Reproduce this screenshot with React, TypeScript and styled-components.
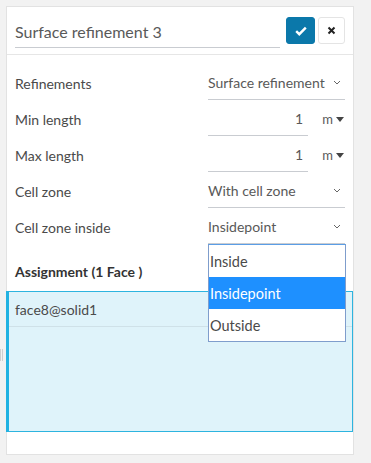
import React from 'react';
import styled, { createGlobalStyle } from 'styled-components';

const GlobalStyle = createGlobalStyle`
  html, body {
    margin: 0;
    padding: 0;
    background: #f2f2f2;
  }
  body {
    font-family: Lato, "Open Sans", "Liberation Sans", sans-serif;
    color: #333;
  }
  * {
    box-sizing: border-box;
  }
`;

const Page = styled.div`
  position: relative;
  width: 371px;
  height: 463px;
  padding: 6px 17px 8px 6px;
`;

const Handle = styled.div`
  position: absolute;
  left: 0;
  top: 349px;
  width: 3px;
  height: 12px;
  border-left: 1px solid #cfcfcf;
  border-right: 1px solid #cfcfcf;
`;

const Panel = styled.div`
  position: relative;
  width: 348px;
  height: 449px;
  background: #ffffff;
  border: 1px solid #e2e2e2;
`;

const Header = styled.div`
  display: flex;
  align-items: flex-start;
  gap: 6px;
  padding: 10px 8px 6px 8px;
  border-bottom: 1px solid #e6e6e6;
`;

const TitleInput = styled.div`
  flex: 1;
  height: 31px;
  display: flex;
  align-items: center;
  padding-bottom: 1px;
  font-size: 16px;
  color: #595959;
  border-bottom: 1px solid #c9ccd1;
`;

const Buttons = styled.div`
  display: flex;
  gap: 3px;
`;

const IconButton = styled.div<{ $primary?: boolean }>`
  width: ${(p) => (p.$primary ? '29px' : '27px')};
  height: 27px;
  border-radius: 3px;
  display: flex;
  align-items: center;
  justify-content: center;
  background: ${(p) => (p.$primary ? '#0b78aa' : '#ffffff')};
  border: 1px solid ${(p) => (p.$primary ? '#0b78aa' : '#e4e4e4')};
`;

const Form = styled.div`
  padding: 9px 8px 0 8px;
`;

const Row = styled.div`
  display: flex;
  align-items: center;
  justify-content: space-between;
  height: 36px;
  font-size: 14px;
  color: #4a4a4a;
`;

const Label = styled.div`
  padding-top: 2px;
`;

const Select = styled.div`
  position: relative;
  width: 137px;
  height: 100%;
  display: flex;
  align-items: center;
  justify-content: space-between;
  padding-top: 2px;
  color: #595959;
  border-bottom: 1px solid #c9ccd1;
  padding-right: 4px;
`;

const LengthField = styled.div`
  display: flex;
  align-items: center;
  width: 137px;
  height: 100%;
  padding-top: 2px;
`;

const NumberInput = styled.div`
  width: 100px;
  height: 100%;
  display: flex;
  align-items: center;
  justify-content: flex-end;
  padding-right: 5px;
  color: #595959;
  border-bottom: 1px solid #c9ccd1;
`;

const Unit = styled.div`
  flex: 1;
  display: flex;
  align-items: center;
  justify-content: flex-end;
  gap: 3px;
  padding-right: 1px;
  color: #595959;
  font-size: 13px;
`;

const Dropdown = styled.div`
  position: absolute;
  left: 0;
  top: 36px;
  width: 138px;
  background: #ffffff;
  border: 1px solid #7f9dcc;
  border-top-color: #5b9ee6;
  z-index: 2;
`;

const Option = styled.div<{ $active?: boolean }>`
  height: 32px;
  display: flex;
  align-items: center;
  padding-left: 1px;
  font-size: 14.5px;
  color: ${(p) => (p.$active ? '#ffffff' : '#4a4a4a')};
  background: ${(p) => (p.$active ? '#1e90ff' : 'transparent')};
`;

const SectionTitle = styled.div`
  padding: 8px 8px 0 8px;
  height: 47px;
  display: flex;
  align-items: center;
  font-size: 14px;
  font-weight: 700;
  color: #333;
`;

const AssignmentList = styled.div`
  margin: 0 0 0 -1px;
  height: 141px;
  background: #dff3fa;
  border: 1px solid #2db4df;
  border-left: 3px solid #22b2e2;
`;

const ListItem = styled.div`
  height: 35px;
  display: flex;
  align-items: center;
  padding-left: 6px;
  font-size: 14px;
  color: #4a4a4a;
  border-bottom: 1px solid #cfe1e8;
`;

const Chevron = () => (
  <svg width="8" height="5" viewBox="0 0 8 5">
    <path d="M1 1l3 3 3-3" fill="none" stroke="#666" strokeWidth="1" />
  </svg>
);

const Caret = () => (
  <svg width="8" height="5" viewBox="0 0 8 5">
    <path d="M0 0h8L4 5z" fill="#444" />
  </svg>
);

const App: React.FC = () => {
  return (
    <>
      <GlobalStyle />
      <Page>
        <Handle />
        <Panel>
          <Header>
            <TitleInput>Surface refinement 3</TitleInput>
            <Buttons>
              <IconButton $primary>
                <svg width="12" height="10" viewBox="0 0 12 10">
                  <path d="M1.2 5.2l3.1 3 6.5-6.6" fill="none" stroke="#fff" strokeWidth="2.4" />
                </svg>
              </IconButton>
              <IconButton>
                <svg width="9" height="9" viewBox="0 0 9 9">
                  <path d="M1.5 1.5l6 6M7.5 1.5l-6 6" fill="none" stroke="#222" strokeWidth="2" />
                </svg>
              </IconButton>
            </Buttons>
          </Header>
          <Form>
            <Row>
              <Label>Refinements</Label>
              <Select>
                Surface refinement
                <Chevron />
              </Select>
            </Row>
            <Row>
              <Label>Min length</Label>
              <LengthField>
                <NumberInput>1</NumberInput>
                <Unit>
                  m<Caret />
                </Unit>
              </LengthField>
            </Row>
            <Row>
              <Label>Max length</Label>
              <LengthField>
                <NumberInput>1</NumberInput>
                <Unit>
                  m<Caret />
                </Unit>
              </LengthField>
            </Row>
            <Row>
              <Label>Cell zone</Label>
              <Select>
                With cell zone
                <Chevron />
              </Select>
            </Row>
            <Row>
              <Label>Cell zone inside</Label>
              <Select>
                Insidepoint
                <Chevron />
                <Dropdown>
                  <Option>Inside</Option>
                  <Option $active>Insidepoint</Option>
                  <Option>Outside</Option>
                </Dropdown>
              </Select>
            </Row>
          </Form>
          <SectionTitle>Assignment (1 Face )</SectionTitle>
          <AssignmentList>
            <ListItem>face8@solid1</ListItem>
          </AssignmentList>
        </Panel>
      </Page>
    </>
  );
};

export default App;
